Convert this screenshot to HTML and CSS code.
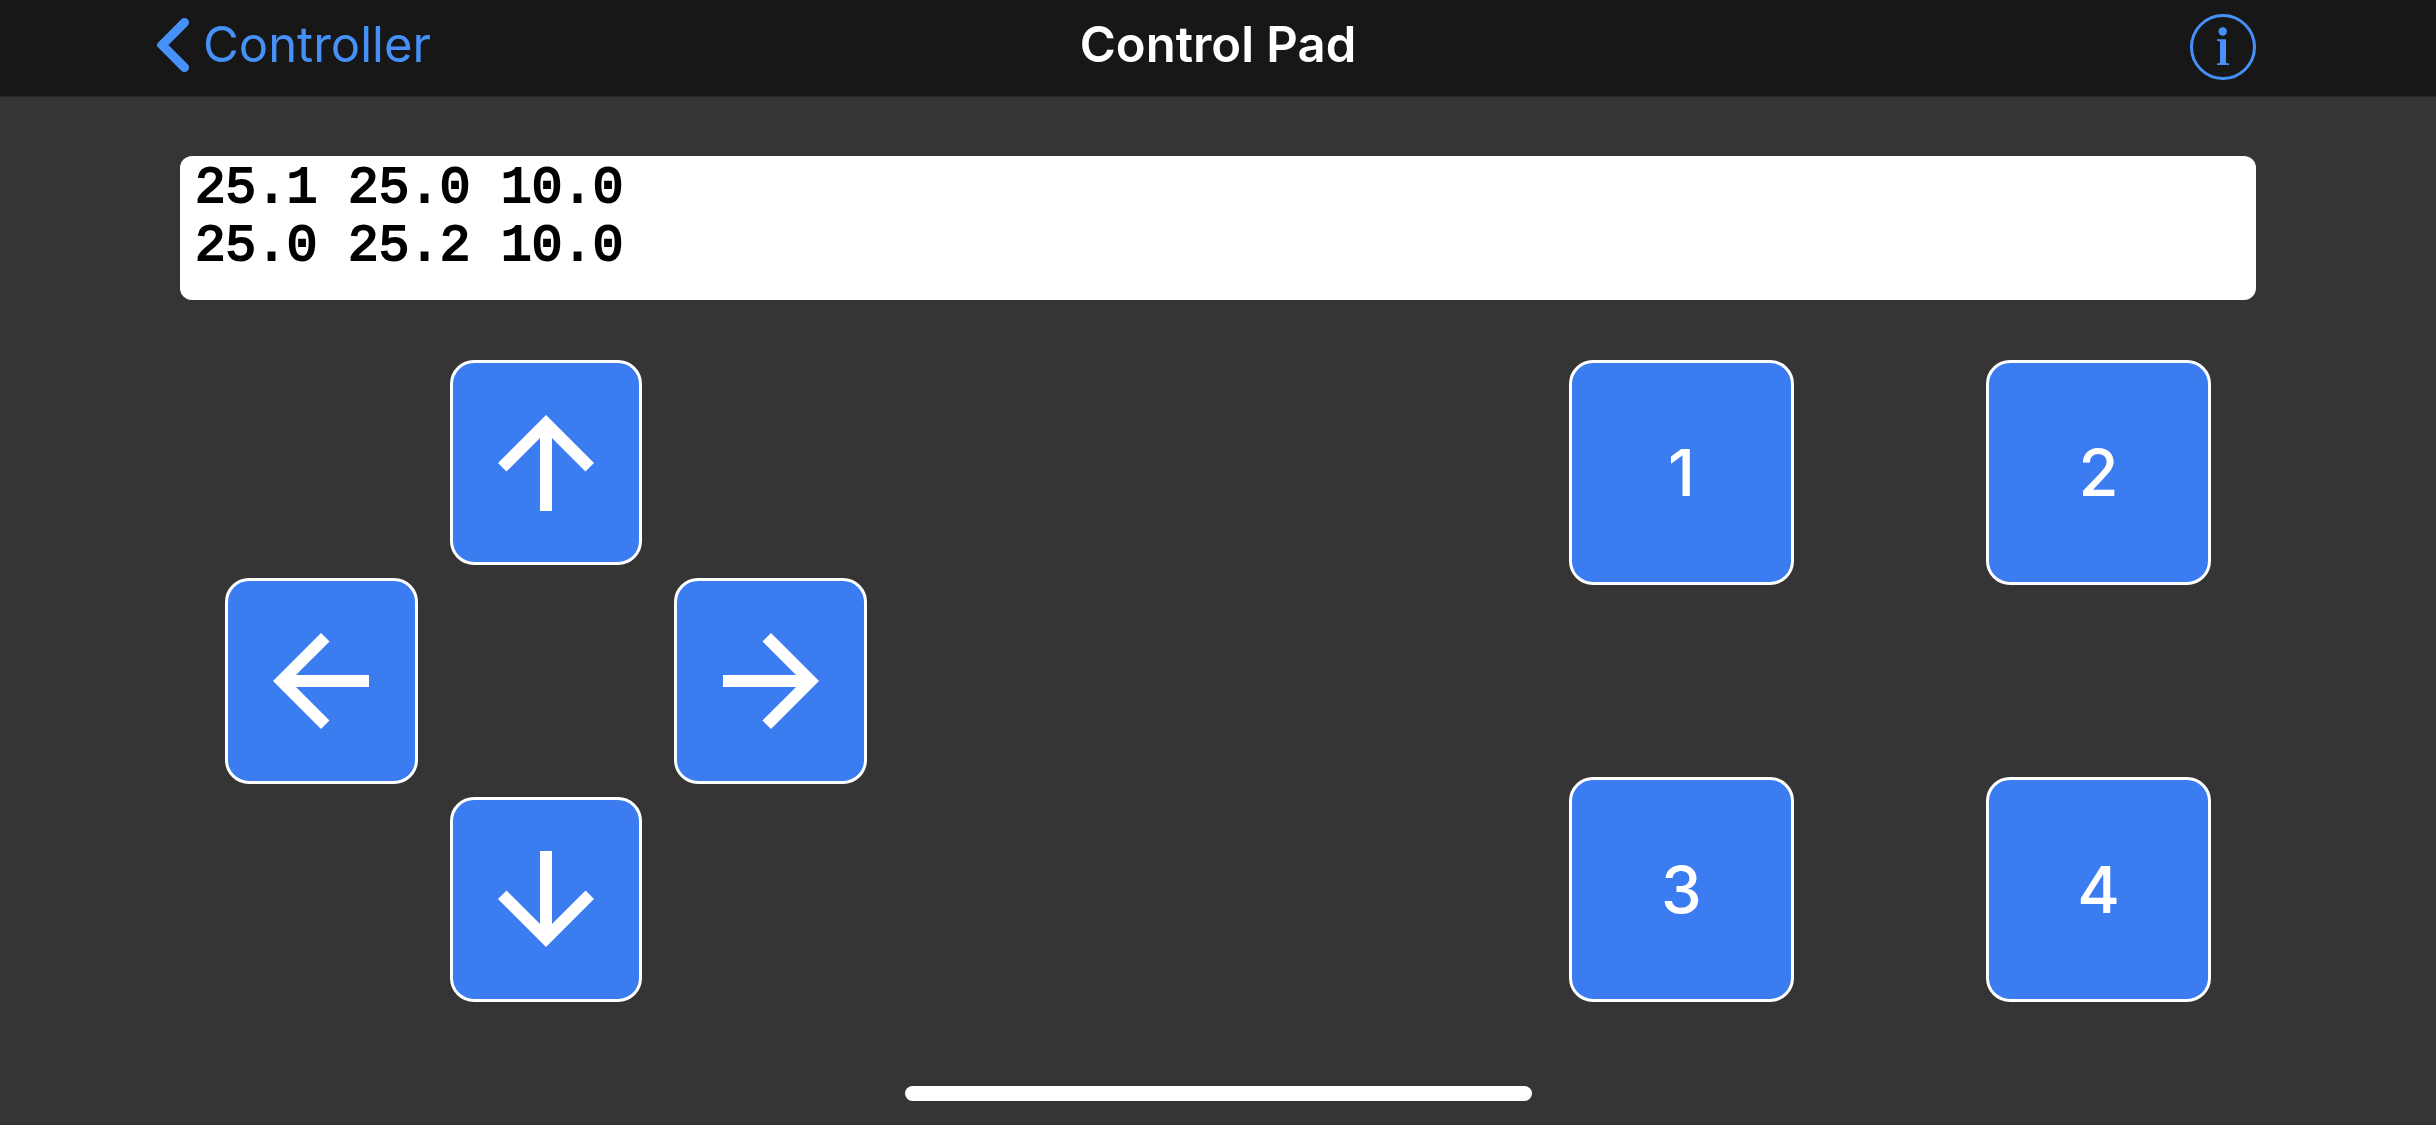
FILE: index.html
```html
<!DOCTYPE html>
<html lang="en">
<head>
<meta charset="utf-8">
<meta name="viewport" content="width=device-width, initial-scale=1">
<title>Control Pad</title>
<link rel="stylesheet" href="styles.css">
</head>
<body>
<svg class="sprite" aria-hidden="true">
  <symbol id="arrow" viewBox="0 0 24 24"><path d="M4 12l1.41 1.41L11 7.83V20h2V7.83l5.58 5.59L20 12l-8-8-8 8z"/></symbol>
</svg>
<header class="navbar">
  <a class="back" href="#controller">
    <svg class="chevron" viewBox="0 0 32 54" aria-hidden="true"><path d="M27.500 4.500L5 27l22.500 22.500"/></svg>
    <span>Controller</span>
  </a>
  <h1 class="title">Control Pad</h1>
  <button class="info" type="button" aria-label="Info">
    <svg class="info-icon" viewBox="0 0 66 66" aria-hidden="true">
      <circle class="ring" cx="33" cy="33" r="31.500"/>
      <circle cx="32.700" cy="17.500" r="4.200"/>
      <path d="M27 25.300h9v23.700l3 .6V51H27v-1.400l3-.6V27.500l-3-.7z"/>
    </svg>
  </button>
</header>
<main class="content">
  <textarea class="console" aria-label="Received data" rows="2" readonly>25.1 25.0 10.0
25.0 25.2 10.0</textarea>
  <div class="pads">
    <div class="dpad">
      <button class="key up" type="button" aria-label="Up"><svg class="arrow"><use href="#arrow"/></svg></button>
      <button class="key left" type="button" aria-label="Left"><svg class="arrow"><use href="#arrow"/></svg></button>
      <button class="key right" type="button" aria-label="Right"><svg class="arrow"><use href="#arrow"/></svg></button>
      <button class="key down" type="button" aria-label="Down"><svg class="arrow"><use href="#arrow"/></svg></button>
    </div>
    <div class="numpad">
      <button class="key" type="button">1</button>
      <button class="key" type="button">2</button>
      <button class="key" type="button">3</button>
      <button class="key" type="button">4</button>
    </div>
  </div>
</main>
<footer class="home"><div class="home-bar"></div></footer>
</body>
</html>
```

FILE: styles.css
```css
* {
  box-sizing: border-box;
}

body {
  margin: 0;
  min-height: 100vh;
  display: flex;
  flex-direction: column;
  background: #353535;
  color: #fff;
  font-family: Inter, "Liberation Sans", sans-serif;
}

button {
  padding: 0;
  border: 0;
  background: none;
  color: inherit;
  font: inherit;
}

.sprite {
  display: none;
}

.navbar {
  display: grid;
  grid-template-columns: 1fr auto 1fr;
  align-items: center;
  height: 97px;
  padding: 0 157px 6px;
  background: #171717;
  border-bottom: 1px solid #262626;
}

.back {
  display: flex;
  align-items: center;
  gap: 14px;
  color: #4691f8;
  font-size: 49px;
  line-height: 60px;
  text-decoration: none;
}

.chevron {
  width: 32px;
  height: 54px;
  fill: none;
  stroke: currentColor;
  stroke-width: 9;
  stroke-linecap: round;
}

.title {
  margin: 0;
  font-size: 49px;
  font-weight: 600;
  line-height: 60px;
}

.info {
  justify-self: end;
  height: 66px;
  margin: 4px 23px 0 0;
  color: #4691f8;
}

.info-icon {
  display: block;
  width: 66px;
  height: 66px;
  fill: currentColor;
}

.ring {
  fill: none;
  stroke: currentColor;
  stroke-width: 3;
}

.content {
  flex: 1;
  display: flex;
  flex-direction: column;
  gap: 60px;
  padding: 59px 180px 0;
}

.console {
  display: block;
  width: 100%;
  height: 144px;
  padding: 4px 15px 0;
  border: 0;
  border-radius: 12px;
  background: #fff;
  color: #000;
  font-family: "Liberation Mono", monospace;
  font-size: 51px;
  -webkit-text-stroke: 2px #000;
  line-height: 58px;
  resize: none;
  overflow: hidden;
  outline: none;
}

.pads {
  display: flex;
  justify-content: space-between;
  padding: 0 45px;
}

.dpad,
.numpad {
  display: grid;
  width: 642px;
  height: 642px;
}

.dpad {
  grid-template: repeat(3, 1fr) / repeat(3, 1fr);
  grid-template-areas: ". up ." "left . right" ". down .";
  gap: 13px 32px;
}

.numpad {
  grid-template: repeat(2, 1fr) / repeat(2, 1fr);
  gap: 192px;
}

.key {
  display: flex;
  align-items: center;
  justify-content: center;
  border: 3px solid #fff;
  border-radius: 24px;
  background: #3b7cf0;
  font-size: 65px;
  font-weight: 500;
  line-height: 78px;
}

.arrow {
  width: 144px;
  height: 144px;
  fill: #fff;
}

.up { grid-area: up; }
.left { grid-area: left; }
.right { grid-area: right; }
.down { grid-area: down; }

.left .arrow { transform: rotate(-90deg); }
.right .arrow { transform: rotate(90deg); }
.down .arrow { transform: rotate(180deg); }

.home {
  display: flex;
  justify-content: center;
  padding-bottom: 24px;
}

.home-bar {
  width: 627px;
  height: 15px;
  border-radius: 8px;
  background: #fff;
}
```
